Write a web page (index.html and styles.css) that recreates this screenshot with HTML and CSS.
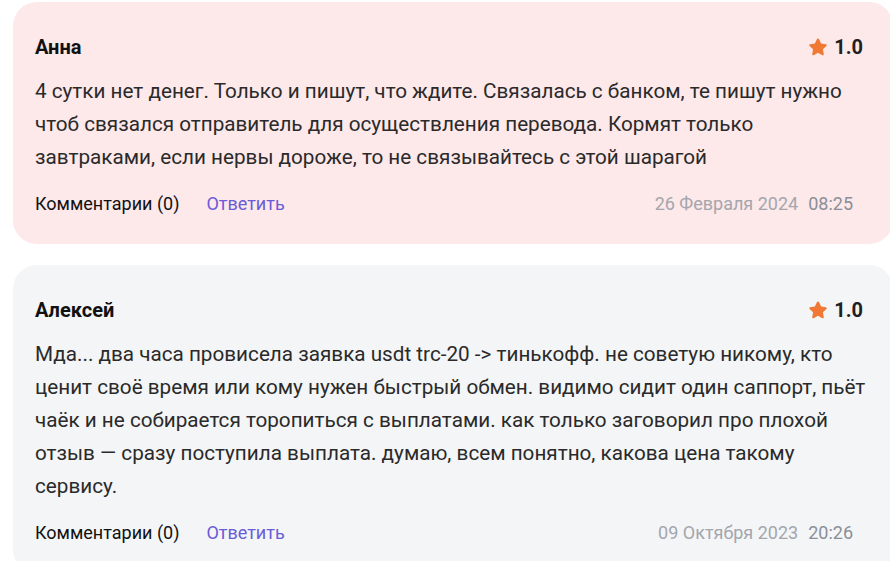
FILE: index.html
```html
<!DOCTYPE html>
<html lang="ru">
<head>
<meta charset="utf-8">
<link rel="stylesheet" href="styles.css">
</head>
<body>
<div class="list">
  <div class="review review-neg">
    <div class="head">
      <span class="name">Анна</span>
      <span class="rating">
        <svg class="star" viewBox="0 0 24 24" width="22" height="22"><path d="M12 2.6c.5 0 .9.3 1.1.7l2.3 4.9 5.2.7c.9.1 1.3 1.3.6 1.9l-3.8 3.7.9 5.3c.2.9-.8 1.6-1.6 1.2L12 18.4 7.3 21c-.8.4-1.8-.3-1.6-1.2l.9-5.3-3.8-3.7c-.7-.6-.3-1.8.6-1.9l5.2-.7 2.3-4.9c.2-.4.6-.7 1.1-.7z"/></svg>
        1.0
      </span>
    </div>
    <p class="text">4 сутки нет денег. Только и пишут, что ждите. Связалась с банком, те пишут нужно чтоб связался отправитель для осуществления перевода. Кормят только завтраками, если нервы дороже, то не связывайтесь с этой шарагой</p>
    <div class="foot">
      <span class="comments">Комментарии (0)</span>
      <a class="reply">Ответить</a>
      <span class="date">26 Февраля 2024</span>
      <span class="time">08:25</span>
    </div>
  </div>
  <div class="review review-neutral">
    <div class="head">
      <span class="name">Алексей</span>
      <span class="rating">
        <svg class="star" viewBox="0 0 24 24" width="22" height="22"><path d="M12 2.6c.5 0 .9.3 1.1.7l2.3 4.9 5.2.7c.9.1 1.3 1.3.6 1.9l-3.8 3.7.9 5.3c.2.9-.8 1.6-1.6 1.2L12 18.4 7.3 21c-.8.4-1.8-.3-1.6-1.2l.9-5.3-3.8-3.7c-.7-.6-.3-1.8.6-1.9l5.2-.7 2.3-4.9c.2-.4.6-.7 1.1-.7z"/></svg>
        1.0
      </span>
    </div>
    <p class="text">Мда... два часа провисела заявка usdt trc-20 -&gt; тинькофф. не советую никому, кто ценит своё время или кому нужен быстрый обмен. видимо сидит один саппорт, пьёт чаёк и не собирается торопиться с выплатами. как только заговорил про плохой отзыв — сразу поступила выплата. думаю, всем понятно, какова цена такому сервису.</p>
    <div class="foot">
      <span class="comments">Комментарии (0)</span>
      <a class="reply">Ответить</a>
      <span class="date">09 Октября 2023</span>
      <span class="time">20:26</span>
    </div>
  </div>
</div>
</body>
</html>
```

FILE: styles.css
```css
html, body {
  margin: 0;
  padding: 0;
  background: #ffffff;
  overflow: hidden;
}
body {
  font-family: Roboto, "Noto Sans", sans-serif;
  color: #222222;
}
.list {
  display: flex;
  flex-direction: column;
  gap: 21px;
  padding: 2px 0 0 13px;
  width: 880px;
}
.review {
  border-radius: 24px;
  padding: 30px 12px 26px 22px;
}
.review-neg { background: #fde8ea; }
.review-neutral { background: #f4f5f7; }
.head {
  display: flex;
  justify-content: space-between;
  align-items: center;
  height: 30px;
  padding-right: 18px;
}
.name {
  font-weight: 700;
  font-size: 20px;
  color: #111111;
}
.rating {
  display: flex;
  align-items: center;
  gap: 5px;
  font-weight: 700;
  font-size: 20px;
  color: #1f1f24;
}
.star { fill: #f07a35; }
.text {
  margin: 13px 0 0;
  padding-right: 7px;
  font-size: 20.7px;
  line-height: 33px;
  color: #2a2a2a;
}
.foot {
  display: flex;
  align-items: center;
  height: 30px;
  margin-top: 14px;
  font-size: 18px;
  padding-right: 28px;
}
.comments { color: #111111; }
.reply {
  color: #6a5bd8;
  margin-left: 27px;
}
.date {
  margin-left: auto;
  color: #a3a6ad;
}
.time {
  margin-left: 10px;
  color: #8a8f98;
}
```
